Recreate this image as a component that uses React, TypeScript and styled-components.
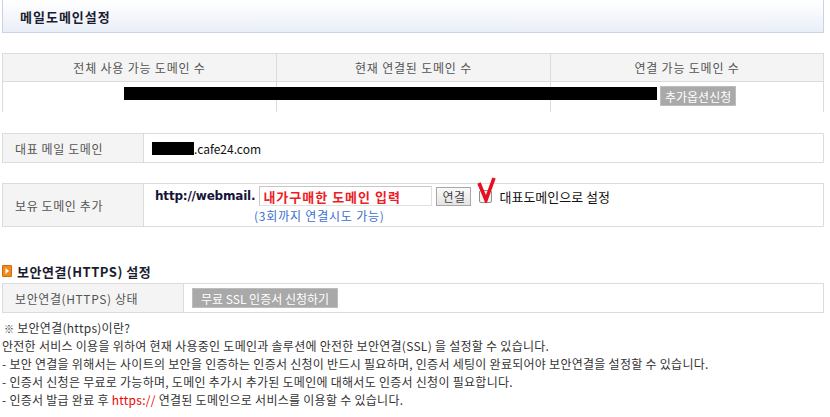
import styled, { createGlobalStyle } from "styled-components";

const GlobalStyle = createGlobalStyle`
  body {
    margin: 0;
    background: #fff;
    font-family: "Noto Sans CJK KR", "Liberation Sans", sans-serif;
    font-size: 12px;
    color: #333;
  }
`;

const notes = [
  "안전한 서비스 이용을 위하여 현재 사용중인 도메인과 솔루션에 안전한 보안연결(SSL) 을 설정할 수 있습니다.",
  "- 보안 연결을 위해서는 사이트의 보안을 인증하는 인증서 신청이 반드시 필요하며, 인증서 세팅이 완료되어야 보안연결을 설정할 수 있습니다.",
  "- 인증서 신청은 무료로 가능하며, 도메인 추가시 추가된 도메인에 대해서도 인증서 신청이 필요합니다.",
];

const App = () => {
  return (
    <Page>
      <GlobalStyle />
      <TitleBox>
        <Title>메일도메인설정</Title>
      </TitleBox>

      <CountTable>
        <HeadCell>전체 사용 가능 도메인 수</HeadCell>
        <HeadCell>현재 연결된 도메인 수</HeadCell>
        <HeadCell $last>연결 가능 도메인 수</HeadCell>
        <CountRow>
          <Masked $w={533} $h={13} />
          <GrayButton>추가옵션신청</GrayButton>
        </CountRow>
      </CountTable>

      <FormTable $label={141} $mt={21}>
        <Label>대표 메일 도메인</Label>
        <Value>
          <Masked $w={42} $h={13} />
          <span>.cafe24.com</span>
        </Value>
      </FormTable>

      <FormTable $label={141} $mt={20}>
        <Label>보유 도메인 추가</Label>
        <Value $column>
          <InputLine>
            <Prefix>http://webmail.</Prefix>
            <DomainInput>내가구매한 도메인 입력</DomainInput>
            <SmallButton>연결</SmallButton>
            <CheckWrap>
              <CheckBox />
              <CheckMark viewBox="0 0 20 26">
                <path d="M2 6 L9 23 L17 1" fill="none" stroke="#e8101e" strokeWidth="3.6" strokeLinejoin="miter" />
              </CheckMark>
            </CheckWrap>
            <CheckLabel>대표도메인으로 설정</CheckLabel>
          </InputLine>
          <Hint>(3회까지 연결시도 가능)</Hint>
        </Value>
      </FormTable>

      <SectionTitle>
        <Bullet>
          <svg width="10" height="12" viewBox="0 0 10 12">
            <rect x="0" y="0" width="10" height="12" rx="1" fill="#f08a1c" />
            <rect x="0.5" y="0.5" width="9" height="11" rx="1" fill="none" stroke="#d66a00" />
            <path d="M3.5 3 L7 6 L3.5 9 Z" fill="#fff" />
          </svg>
        </Bullet>
        보안연결(HTTPS) 설정
      </SectionTitle>

      <FormTable $label={181} $mt={4}>
        <Label>보안연결(HTTPS) 상태</Label>
        <Value>
          <GrayButton $wide>무료 SSL 인증서 신청하기</GrayButton>
        </Value>
      </FormTable>

      <Notes>
        <NoteLine>
          <Mark>※</Mark> 보안연결(https)이란?
        </NoteLine>
        {notes.map((line, i) => (
          <NoteLine key={i}>{line}</NoteLine>
        ))}
        <NoteLine>
          - 인증서 발급 완료 후 <Red>https://</Red> 연결된 도메인으로 서비스를 이용할 수 있습니다.
        </NoteLine>
      </Notes>
    </Page>
  );
};

const Page = styled.div`
  width: 822px;
  padding: 0 6px 0 2px;
  display: flex;
  flex-direction: column;
`;

const TitleBox = styled.div`
  height: 32px;
  border: 1px solid #c9d3e6;
  border-top: none;
  background: linear-gradient(to bottom, #ffffff 0%, #f6f8fc 45%, #e9eef8 100%);
  display: flex;
  align-items: center;
  padding-left: 17px;
`;

const Title = styled.h1`
  margin: 0;
  font-size: 13px;
  letter-spacing: 1px;
  font-weight: bold;
  color: #1c1c30;
`;

const CountTable = styled.div`
  margin-top: 20px;
  display: grid;
  grid-template-columns: 274px 274px 1fr;
  border-top: 1px solid #dcdcdc;
  border-left: 1px solid #dcdcdc;
  border-right: 1px solid #dcdcdc;
`;

const HeadCell = styled.div<{ $last?: boolean }>`
  height: 27px;
  background: #f4f4f4;
  border-bottom: 1px solid #dcdcdc;
  border-right: ${(p) => (p.$last ? "none" : "1px solid #dcdcdc")};
  display: flex;
  align-items: center;
  justify-content: center;
  color: #555;
  letter-spacing: 0.8px;
`;

const CountRow = styled.div`
  grid-column: 1 / 4;
  height: 26px;
  display: flex;
  align-items: flex-start;
  padding: 4px 0 0 121px;
  gap: 3px;
  background: linear-gradient(to right, transparent 273px, #dcdcdc 273px, #dcdcdc 274px, transparent 274px, transparent 547px, #dcdcdc 547px, #dcdcdc 548px, transparent 548px);
`;

const Masked = styled.span<{ $w: number; $h: number }>`
  display: inline-block;
  width: ${(p) => p.$w}px;
  height: ${(p) => p.$h}px;
  background: #000;
  margin-top: 1px;
`;

const GrayButton = styled.span<{ $wide?: boolean }>`
  display: inline-flex;
  align-items: center;
  justify-content: center;
  height: 18px;
  padding: 0 ${(p) => (p.$wide ? 8 : 4)}px;
  background: #a9a9a9;
  border: 1px solid #bdbdbd;
  color: #fff;
  font-size: 12px;
`;

const FormTable = styled.div<{ $label: number; $mt: number }>`
  margin-top: ${(p) => p.$mt}px;
  display: grid;
  grid-template-columns: ${(p) => p.$label}px 1fr;
  border: 1px solid #dcdcdc;
`;

const Label = styled.div`
  background: #f4f4f4;
  border-right: 1px solid #dcdcdc;
  color: #555;
  display: flex;
  align-items: center;
  padding-left: 12px;
  min-height: 28px;
  letter-spacing: 0.6px;
`;

const Value = styled.div<{ $column?: boolean }>`
  display: flex;
  flex-direction: ${(p) => (p.$column ? "column" : "row")};
  align-items: ${(p) => (p.$column ? "flex-start" : "center")};
  padding: ${(p) => (p.$column ? "2px 0 2px 11px" : "0 0 0 8px")};
  color: #111;
`;

const InputLine = styled.div`
  display: flex;
  align-items: center;
  gap: 4px;
`;

const Prefix = styled.span`
  font-family: "DejaVu Sans", "Liberation Sans", sans-serif;
  font-weight: bold;
  font-size: 12px;
  letter-spacing: -0.2px;
  color: #14143a;
`;

const DomainInput = styled.span`
  width: 168px;
  height: 18px;
  border: 1px solid #c8c8c8;
  border-right-color: #e0e0e0;
  border-bottom-color: #e0e0e0;
  color: #ee1c25;
  font-weight: bold;
  font-size: 13px;
  letter-spacing: 1px;
  padding-left: 3px;
  display: flex;
  align-items: center;
  white-space: nowrap;
  overflow: hidden;
`;

const SmallButton = styled.span`
  height: 17px;
  padding: 0 5px;
  border: 1px solid #a8a8a8;
  background: linear-gradient(to bottom, #fafafa, #e4e4e4);
  color: #444;
  display: flex;
  align-items: center;
  font-size: 12px;
  letter-spacing: 0.5px;
`;

const CheckWrap = styled.span`
  position: relative;
  width: 13px;
  height: 13px;
  margin-left: 4px;
`;

const CheckBox = styled.span`
  display: block;
  width: 11px;
  height: 11px;
  border: 1px solid #8e8f8f;
  border-radius: 2px;
  background: #f4f4f4;
`;

const CheckMark = styled.svg`
  position: absolute;
  left: -2px;
  top: -13px;
  width: 20px;
  height: 26px;
`;

const CheckLabel = styled.span`
  color: #111;
  font-size: 13px;
  margin-left: 3px;
`;

const Hint = styled.div`
  color: #3b6fd0;
  letter-spacing: 0.8px;
  margin: 1px 0 0 99px;
`;

const SectionTitle = styled.h2`
  margin: 36px 0 0;
  display: flex;
  align-items: center;
  gap: 5px;
  font-size: 13px;
  letter-spacing: 0.5px;
  font-weight: bold;
  color: #1c1c30;
  height: 16px;
`;

const Bullet = styled.span`
  display: flex;
`;

const Notes = styled.div`
  margin-top: 6px;
  display: flex;
  flex-direction: column;
  color: #333;
  letter-spacing: 0.27px;
`;

const NoteLine = styled.div`
  height: 18px;
  line-height: 18px;
  white-space: nowrap;
`;

const Mark = styled.span`
  font-size: 10px;
  margin-left: 2px;
`;

const Red = styled.span`
  color: #ee0000;
`;

export default App;
